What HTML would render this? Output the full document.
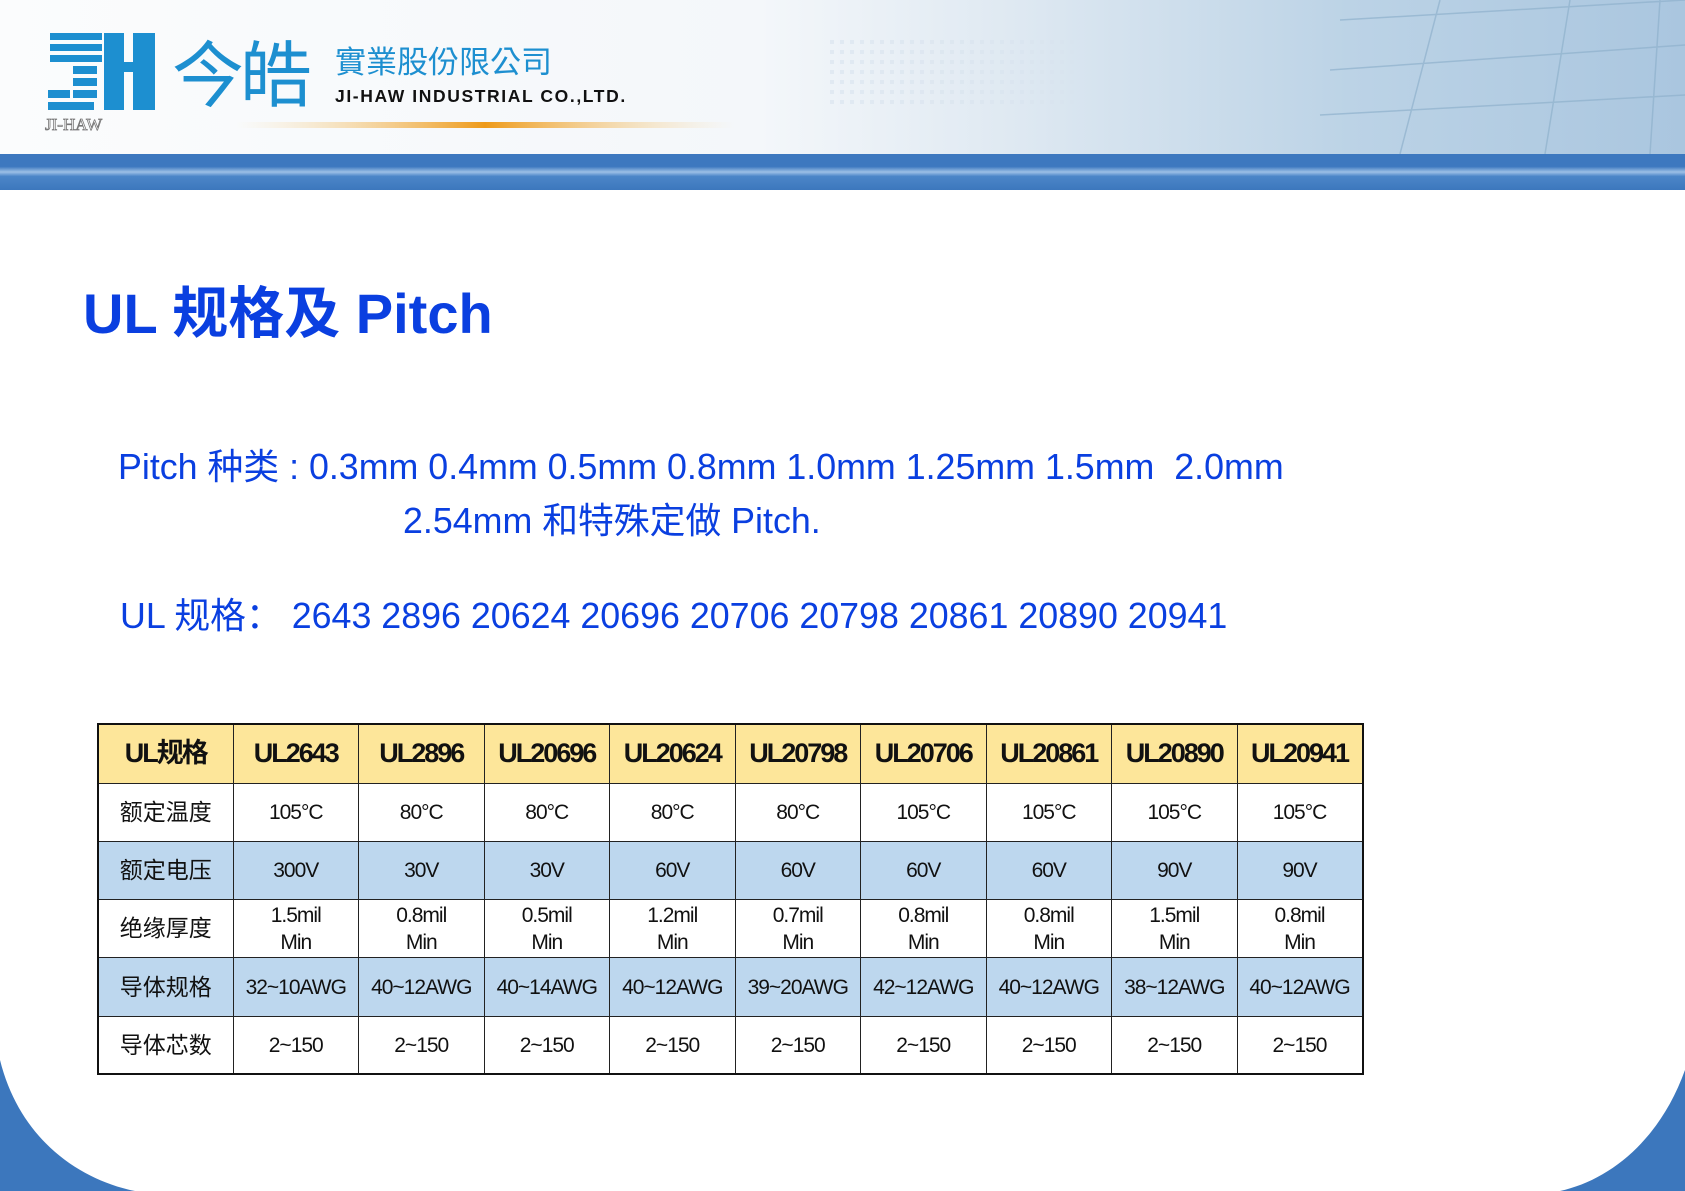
<!DOCTYPE html>
<html><head><meta charset="utf-8"><style>
*{margin:0;padding:0;box-sizing:border-box}
body{width:1685px;height:1191px;position:relative;overflow:hidden;background:#fff;font-family:"Liberation Sans","Noto Sans CJK SC",sans-serif}
.hdr{position:absolute;left:0;top:0;width:1685px;height:154px;background:linear-gradient(90deg,#fbfcfd 0%,#f4f7fa 45%,#dfe9f2 60%,#bcd3e6 80%,#aac6df 100%)}
.bar{position:absolute;left:0;top:154px;width:1685px;height:36px;background:linear-gradient(180deg,#3d78bf 0%,#3d78bf 35%,#9dc0e6 50%,#4c86c8 62%,#3c77bd 100%)}
.blue{color:#0a3fe0}
.t{position:absolute;white-space:nowrap}
table{position:absolute;left:97px;top:723px;border-collapse:collapse;font-family:"Liberation Sans Narrow","Liberation Sans","Noto Sans CJK SC",sans-serif}
td{border:1.5px solid #222;text-align:center;font-size:21px;color:#111;width:125.5px;height:58.3px;letter-spacing:-1px;line-height:27px}
td:first-child{width:135px;font-family:"Liberation Sans","Noto Sans CJK SC",sans-serif;font-size:23px;letter-spacing:0}
tr.h td{background:#fde69a;font-weight:bold;font-size:27px;letter-spacing:-2px;height:59px}
tr.b td{background:#bdd7ee}
table{border:2px solid #111}
</style></head><body>
<div class="hdr">
<svg width="1685" height="154" style="position:absolute;left:0;top:0">
<g stroke="#8fb0cc" stroke-width="1.5" opacity=".7" fill="none">
<path d="M1440 0 L1400 154 M1570 0 L1545 154 M1660 0 L1650 154 M1340 20 L1685 0 M1330 70 L1685 45 M1320 115 L1685 95"/>
</g>
<g fill="#fff" opacity=".6"><rect x="830" y="40" width="250" height="70" fill="url(#d)"/></g>
<defs><pattern id="d" width="10" height="10" patternUnits="userSpaceOnUse"><rect width="4" height="4" fill="#d8e3ee"/></pattern></defs>
<defs><linearGradient id="o" x1="0" x2="1"><stop offset="0" stop-color="#f7d9a0" stop-opacity="0"/><stop offset=".5" stop-color="#ee9a18"/><stop offset="1" stop-color="#f7d9a0" stop-opacity="0"/></linearGradient></defs>
<rect x="235" y="122" width="500" height="6" fill="url(#o)"/>
<g fill="#1d8fd0">
<rect x="50" y="33" width="52" height="7"/><rect x="50" y="44" width="52" height="7"/><rect x="50" y="55" width="52" height="7"/>
<rect x="73" y="66" width="24" height="8"/><rect x="73" y="78" width="24" height="8"/><rect x="73" y="90" width="24" height="8"/><rect x="48" y="90" width="22" height="8"/><rect x="48" y="102" width="46" height="8"/>
<rect x="104" y="33" width="20" height="77"/><rect x="133" y="33" width="22" height="77"/><rect x="104" y="62" width="51" height="10"/>
</g>
<text x="45" y="130" font-family="Liberation Serif" font-size="17" fill="#fff" stroke="#777" stroke-width=".8">JI-HAW</text>
</svg>
<div class="t" style="left:172px;top:30px;font-size:72px;color:#1d8fd0;font-family:'Noto Sans CJK SC',sans-serif;line-height:80px;letter-spacing:-4px">今皓</div>
<div class="t" style="left:335px;top:42px;font-size:31px;color:#1d8fd0;font-family:'Noto Sans CJK TC',sans-serif;line-height:36px">實業股份限公司</div>
<div class="t" style="left:335px;top:86px;font-size:17.5px;font-weight:bold;color:#111;letter-spacing:1.6px">JI-HAW INDUSTRIAL CO.,LTD.</div>
</div>
<div class="bar"></div>
<svg width="1685" height="1191" style="position:absolute;left:0;top:0">
<path d="M0 1060 C20 1140 80 1180 135 1191 L0 1191 Z" fill="#3c77bd"/>
<path d="M1685 1070 C1660 1140 1610 1180 1560 1191 L1685 1191 Z" fill="#3c77bd"/>
</svg>
<div class="t blue" style="left:83px;top:282px;font-size:56px;font-weight:bold;line-height:64px">UL 规格及 Pitch</div>
<div class="t blue" style="left:118px;top:447px;font-size:35.8px;line-height:40px">Pitch 种类 : 0.3mm 0.4mm 0.5mm 0.8mm 1.0mm 1.25mm 1.5mm &nbsp;2.0mm</div>
<div class="t blue" style="left:403px;top:501px;font-size:35.8px;line-height:40px">2.54mm 和特殊定做 Pitch.</div>
<div class="t blue" style="left:120px;top:596px;font-size:35.8px;line-height:40px">UL 规格： 2643 2896 20624 20696 20706 20798 20861 20890 20941</div>
<table>
<tr class="h"><td>UL规格</td><td>UL2643</td><td>UL2896</td><td>UL20696</td><td>UL20624</td><td>UL20798</td><td>UL20706</td><td>UL20861</td><td>UL20890</td><td>UL20941</td></tr>
<tr><td>额定温度</td><td>105°C</td><td>80°C</td><td>80°C</td><td>80°C</td><td>80°C</td><td>105°C</td><td>105°C</td><td>105°C</td><td>105°C</td></tr>
<tr class="b"><td>额定电压</td><td>300V</td><td>30V</td><td>30V</td><td>60V</td><td>60V</td><td>60V</td><td>60V</td><td>90V</td><td>90V</td></tr>
<tr><td>绝缘厚度</td><td>1.5mil<br>Min</td><td>0.8mil<br>Min</td><td>0.5mil<br>Min</td><td>1.2mil<br>Min</td><td>0.7mil<br>Min</td><td>0.8mil<br>Min</td><td>0.8mil<br>Min</td><td>1.5mil<br>Min</td><td>0.8mil<br>Min</td></tr>
<tr class="b"><td>导体规格</td><td>32~10AWG</td><td>40~12AWG</td><td>40~14AWG</td><td>40~12AWG</td><td>39~20AWG</td><td>42~12AWG</td><td>40~12AWG</td><td>38~12AWG</td><td>40~12AWG</td></tr>
<tr><td>导体芯数</td><td>2~150</td><td>2~150</td><td>2~150</td><td>2~150</td><td>2~150</td><td>2~150</td><td>2~150</td><td>2~150</td><td>2~150</td></tr>
</table>
</body></html>
